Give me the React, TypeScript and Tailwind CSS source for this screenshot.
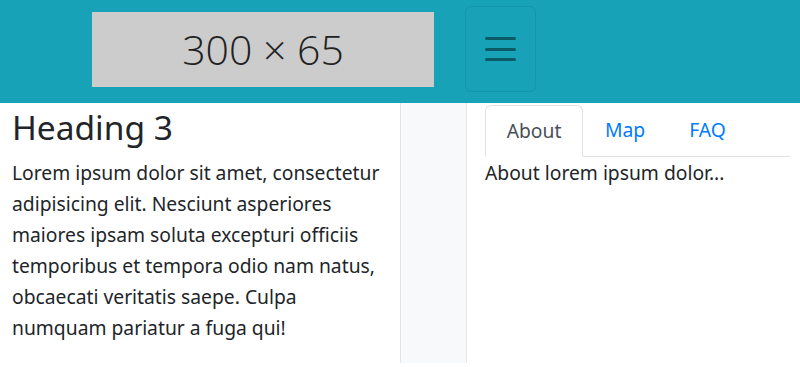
import { useState } from 'react'

const tabs = ['About', 'Map', 'FAQ']

export default function App() {
  const [active, setActive] = useState('About')

  return (
    <div className="flex h-[367px] w-[800px] flex-col overflow-hidden bg-white font-['Noto_Sans',sans-serif] text-[#212529]">
      <header className="flex h-[103px] flex-none items-start bg-[#17a2b8] pl-[92px] pt-[6px]">
        <div className="mt-[6px] flex h-[75px] w-[342px] items-center justify-center bg-[#cccccc] font-['Open_Sans',sans-serif] text-[41px] font-light text-[#222]">
          300 × 65
        </div>
        <button className="ml-[31px] flex h-[86px] w-[71px] flex-col items-center justify-center gap-[7.5px] rounded-md border border-[#1496aa] bg-[#17a2b8]">
          <span className="h-[3px] w-[31px] rounded bg-[#0b5a68]" />
          <span className="h-[3px] w-[31px] rounded bg-[#0b5a68]" />
          <span className="h-[3px] w-[31px] rounded bg-[#0b5a68]" />
        </button>
      </header>

      <main className="flex flex-1 flex-row">
        <section className="w-[400px] flex-none px-3">
          <h3 className="mt-[4px] text-[33.5px] leading-[40px]">Heading 3</h3>
          <p className="mt-[10px] text-[19.3px] leading-[31px]">
            Lorem ipsum dolor sit amet, consectetur adipisicing elit. Nesciunt
            asperiores maiores ipsam soluta excepturi officiis temporibus et
            tempora odio nam natus, obcaecati veritatis saepe. Culpa numquam
            pariatur a fuga qui!
          </p>
        </section>

        <aside className="mb-[4px] w-[67px] flex-none border-x border-[#e3e6e8] bg-[#f8f9fa]" />

        <section className="flex-1 pl-[18px] pr-[10px] pt-[2px]">
          <nav className="flex h-[52px] border-b border-[#dee2e6]">
            {tabs.map((t) => (
              <button
                key={t}
                onClick={() => setActive(t)}
                className={
                  t === active
                    ? '-mb-px flex w-[98px] items-center justify-center rounded-t-md border border-[#dee2e6] border-b-white bg-white text-[19.3px] text-[#495057]'
                    : 'flex items-center px-[22px] text-[19.3px] text-[#007bff]'
                }
              >
                {t}
              </button>
            ))}
          </nav>
          <p className="mt-0 text-[19.3px] leading-[31px]">
            {active} lorem ipsum dolor...
          </p>
        </section>
      </main>
    </div>
  )
}
